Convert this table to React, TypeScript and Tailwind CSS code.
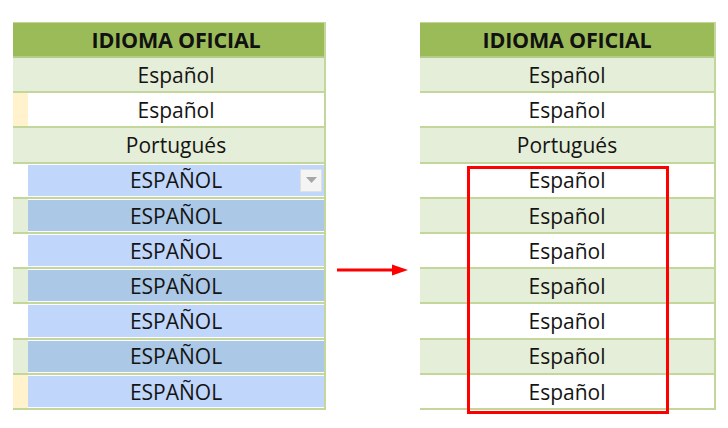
import React from "react";

const font = { fontFamily: "'Open Sans', Lato, sans-serif" };

type LeftRow = { text: string; strip: string; cell: string; blue?: boolean; dropdown?: boolean };

const leftRows: LeftRow[] = [
  { text: "Español", strip: "bg-[#e5eed8]", cell: "bg-[#e5eed8]" },
  { text: "Español", strip: "bg-[#fff2cc]", cell: "bg-white" },
  { text: "Portugués", strip: "bg-[#e5eed8]", cell: "bg-[#e5eed8]" },
  { text: "ESPAÑOL", strip: "bg-white", cell: "bg-[#c0d6fa]", blue: true, dropdown: true },
  { text: "ESPAÑOL", strip: "bg-[#e5eed8]", cell: "bg-[#abc8e6]", blue: true },
  { text: "ESPAÑOL", strip: "bg-white", cell: "bg-[#c0d6fa]", blue: true },
  { text: "ESPAÑOL", strip: "bg-[#e5eed8]", cell: "bg-[#abc8e6]", blue: true },
  { text: "ESPAÑOL", strip: "bg-white", cell: "bg-[#c0d6fa]", blue: true },
  { text: "ESPAÑOL", strip: "bg-[#e5eed8]", cell: "bg-[#abc8e6]", blue: true },
  { text: "ESPAÑOL", strip: "bg-[#fff2cc]", cell: "bg-[#c0d6fa]", blue: true },
];

const rightRows = ["Español", "Español", "Portugués", "Español", "Español", "Español", "Español", "Español", "Español", "Español"];

export default function App() {
  return (
    <div className="w-[728px] h-[428px] bg-white flex items-start pt-[22px]" style={font}>
      {/* Left table */}
      <div className="ml-[13px] w-[313px] border-r-2 border-[#c4d79b]">
        <div className="h-[36px] bg-[#9bbb59] border-t border-[#c4d79b] border-b-2 border-b-[#b5cc88] flex items-center justify-center">
          <span className="text-[21.5px] font-bold text-[#111] pl-[15px] pt-[2px] tracking-[-0.2px]">IDIOMA OFICIAL</span>
        </div>
        {leftRows.map((r, i) => (
          <div key={i} className="flex h-[35.2px] border-b-2 border-[#c4d79b]">
            <div className={`w-[15px] ${r.strip}`} />
            <div className={`flex-1 ${r.blue ? "bg-white py-[1px]" : ""} flex`}>
              <div className={`flex-1 relative flex items-center justify-center ${r.cell}`}>
                <span className="text-[21px] text-[#141414] pt-[2px]">{r.text}</span>
                {r.dropdown && (
                  <div className="absolute right-[2px] top-[4px] w-[22px] h-[23px] bg-[#f4f4f4] border border-[#e0e0e0] flex items-center justify-center">
                    <svg width="11" height="6" viewBox="0 0 11 6">
                      <path d="M0 0 L11 0 L5.5 6 Z" fill="#a6a6a6" />
                    </svg>
                  </div>
                )}
              </div>
            </div>
          </div>
        ))}
      </div>

      {/* Arrow */}
      <div className="w-[94px] pt-[241px] pl-[11px]">
        <svg width="72" height="14" viewBox="0 0 72 14">
          <line x1="0" y1="7" x2="58" y2="7" stroke="#ff0000" strokeWidth="3" />
          <path d="M55 1.5 L71 7 L55 12.5 Z" fill="#ff0000" />
        </svg>
      </div>

      {/* Right table */}
      <div className="relative w-[296px] border-r-2 border-[#c4d79b]">
        <div className="h-[36px] bg-[#9bbb59] border-t border-[#c4d79b] border-b-2 border-b-[#b5cc88] flex items-center justify-center">
          <span className="text-[21.5px] font-bold text-[#111] pt-[2px] tracking-[-0.2px]">IDIOMA OFICIAL</span>
        </div>
        {rightRows.map((t, i) => (
          <div
            key={i}
            className={`h-[35.2px] border-b-2 border-[#c4d79b] flex items-center justify-center ${i % 2 === 0 ? "bg-[#e5eed8]" : "bg-white"}`}
          >
            <span className="text-[21px] text-[#141414] pt-[2px]">{t}</span>
          </div>
        ))}
        <div className="absolute left-[47px] top-[144px] w-[202px] h-[248px] border-[3px] border-[#ff0000]" />
      </div>
    </div>
  );
}
